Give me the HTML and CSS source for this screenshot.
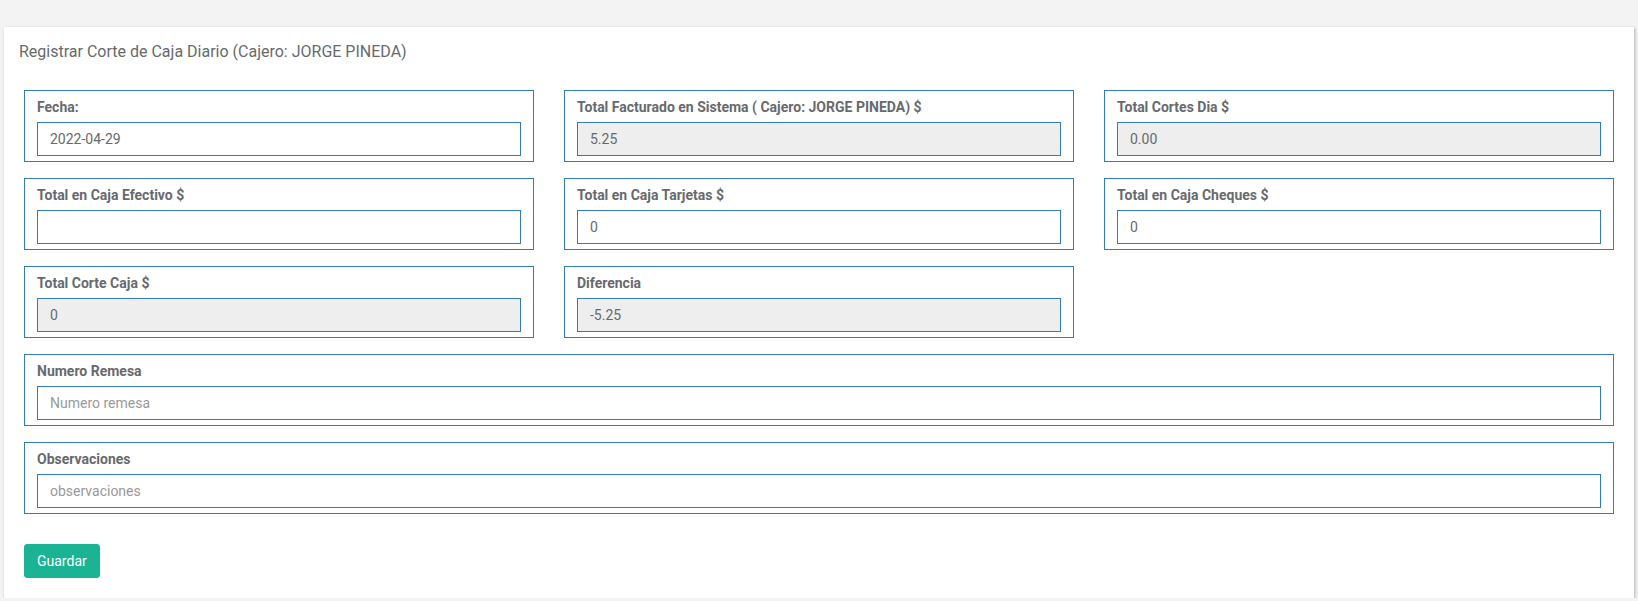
FILE: index.html
```html
<!DOCTYPE html>
<html lang="es">
<head>
<meta charset="utf-8">
<title>Registrar Corte de Caja Diario</title>
<link rel="stylesheet" href="styles.css">
</head>
<body>
<div class="card">
  <div class="card-header">Registrar Corte de Caja Diario (Cajero: JORGE PINEDA)</div>
  <form class="card-body">
    <div class="fields">
      <div class="field">
        <label class="field-label">Fecha:</label>
        <input class="control" type="text" value="2022-04-29">
      </div>
      <div class="field">
        <label class="field-label">Total Facturado en Sistema ( Cajero: JORGE PINEDA) $</label>
        <input class="control" type="text" value="5.25" disabled>
      </div>
      <div class="field">
        <label class="field-label">Total Cortes Dia $</label>
        <input class="control" type="text" value="0.00" disabled>
      </div>
      <div class="field">
        <label class="field-label">Total en Caja Efectivo $</label>
        <input class="control" type="text" value="">
      </div>
      <div class="field">
        <label class="field-label">Total en Caja Tarjetas $</label>
        <input class="control" type="text" value="0">
      </div>
      <div class="field">
        <label class="field-label">Total en Caja Cheques $</label>
        <input class="control" type="text" value="0">
      </div>
      <div class="field">
        <label class="field-label">Total Corte Caja $</label>
        <input class="control" type="text" value="0" disabled>
      </div>
      <div class="field">
        <label class="field-label">Diferencia</label>
        <input class="control" type="text" value="-5.25" disabled>
      </div>
      <div class="field field-wide">
        <label class="field-label">Numero Remesa</label>
        <input class="control" type="text" placeholder="Numero remesa">
      </div>
      <div class="field field-wide">
        <label class="field-label">Observaciones</label>
        <input class="control" type="text" placeholder="observaciones">
      </div>
    </div>
    <button class="btn-primary" type="button">Guardar</button>
  </form>
</div>
</body>
</html>
```

FILE: styles.css
```css
* {
  box-sizing: border-box;
}

html, body {
  margin: 0;
  padding: 0;
}

body {
  background: #f3f3f4;
  font-family: Roboto, "Liberation Sans", sans-serif;
  font-size: 14px;
  color: #676a6c;
  padding: 27px 4px 0 4px;
}

.card {
  background: #ffffff;
  box-shadow: 1px 1px 3px rgba(0, 0, 0, 0.28);
}

.card-header {
  padding: 14px 15px 0;
  font-size: 16px;
  line-height: 22px;
  color: #676a6c;
}

.card-body {
  display: block;
  margin: 0;
  padding: 27px 20px 20px;
}

.fields {
  display: grid;
  grid-template-columns: repeat(3, 1fr);
  column-gap: 30px;
  row-gap: 16px;
}

.field {
  border: 1px solid #337ab7;
  padding: 6px 12px 5px;
  display: flex;
  flex-direction: column;
}

.field-wide {
  grid-column: 1 / -1;
}

.field-label {
  display: block;
  font-weight: 700;
  font-size: 14px;
  line-height: 20px;
  margin-bottom: 5px;
  color: #676a6c;
}

.control {
  display: block;
  width: 100%;
  height: 34px;
  padding: 6px 12px;
  border: 1px solid #337ab7;
  border-radius: 0;
  background: #ffffff;
  font-family: Roboto, "Liberation Sans", sans-serif;
  font-size: 14px;
  color: #676a6c;
  outline: none;
}

.control:disabled {
  background: #eeeeee;
  color: #676a6c;
  -webkit-text-fill-color: #676a6c;
  opacity: 1;
}

.control::placeholder {
  color: #999999;
}

.btn-primary {
  display: block;
  margin-top: 30px;
  height: 34px;
  padding: 6px 12px;
  border: 1px solid #1ab394;
  border-radius: 3px;
  background: #1ab394;
  color: #ffffff;
  font-family: Roboto, "Liberation Sans", sans-serif;
  font-size: 14px;
  line-height: 20px;
  cursor: pointer;
}
```
